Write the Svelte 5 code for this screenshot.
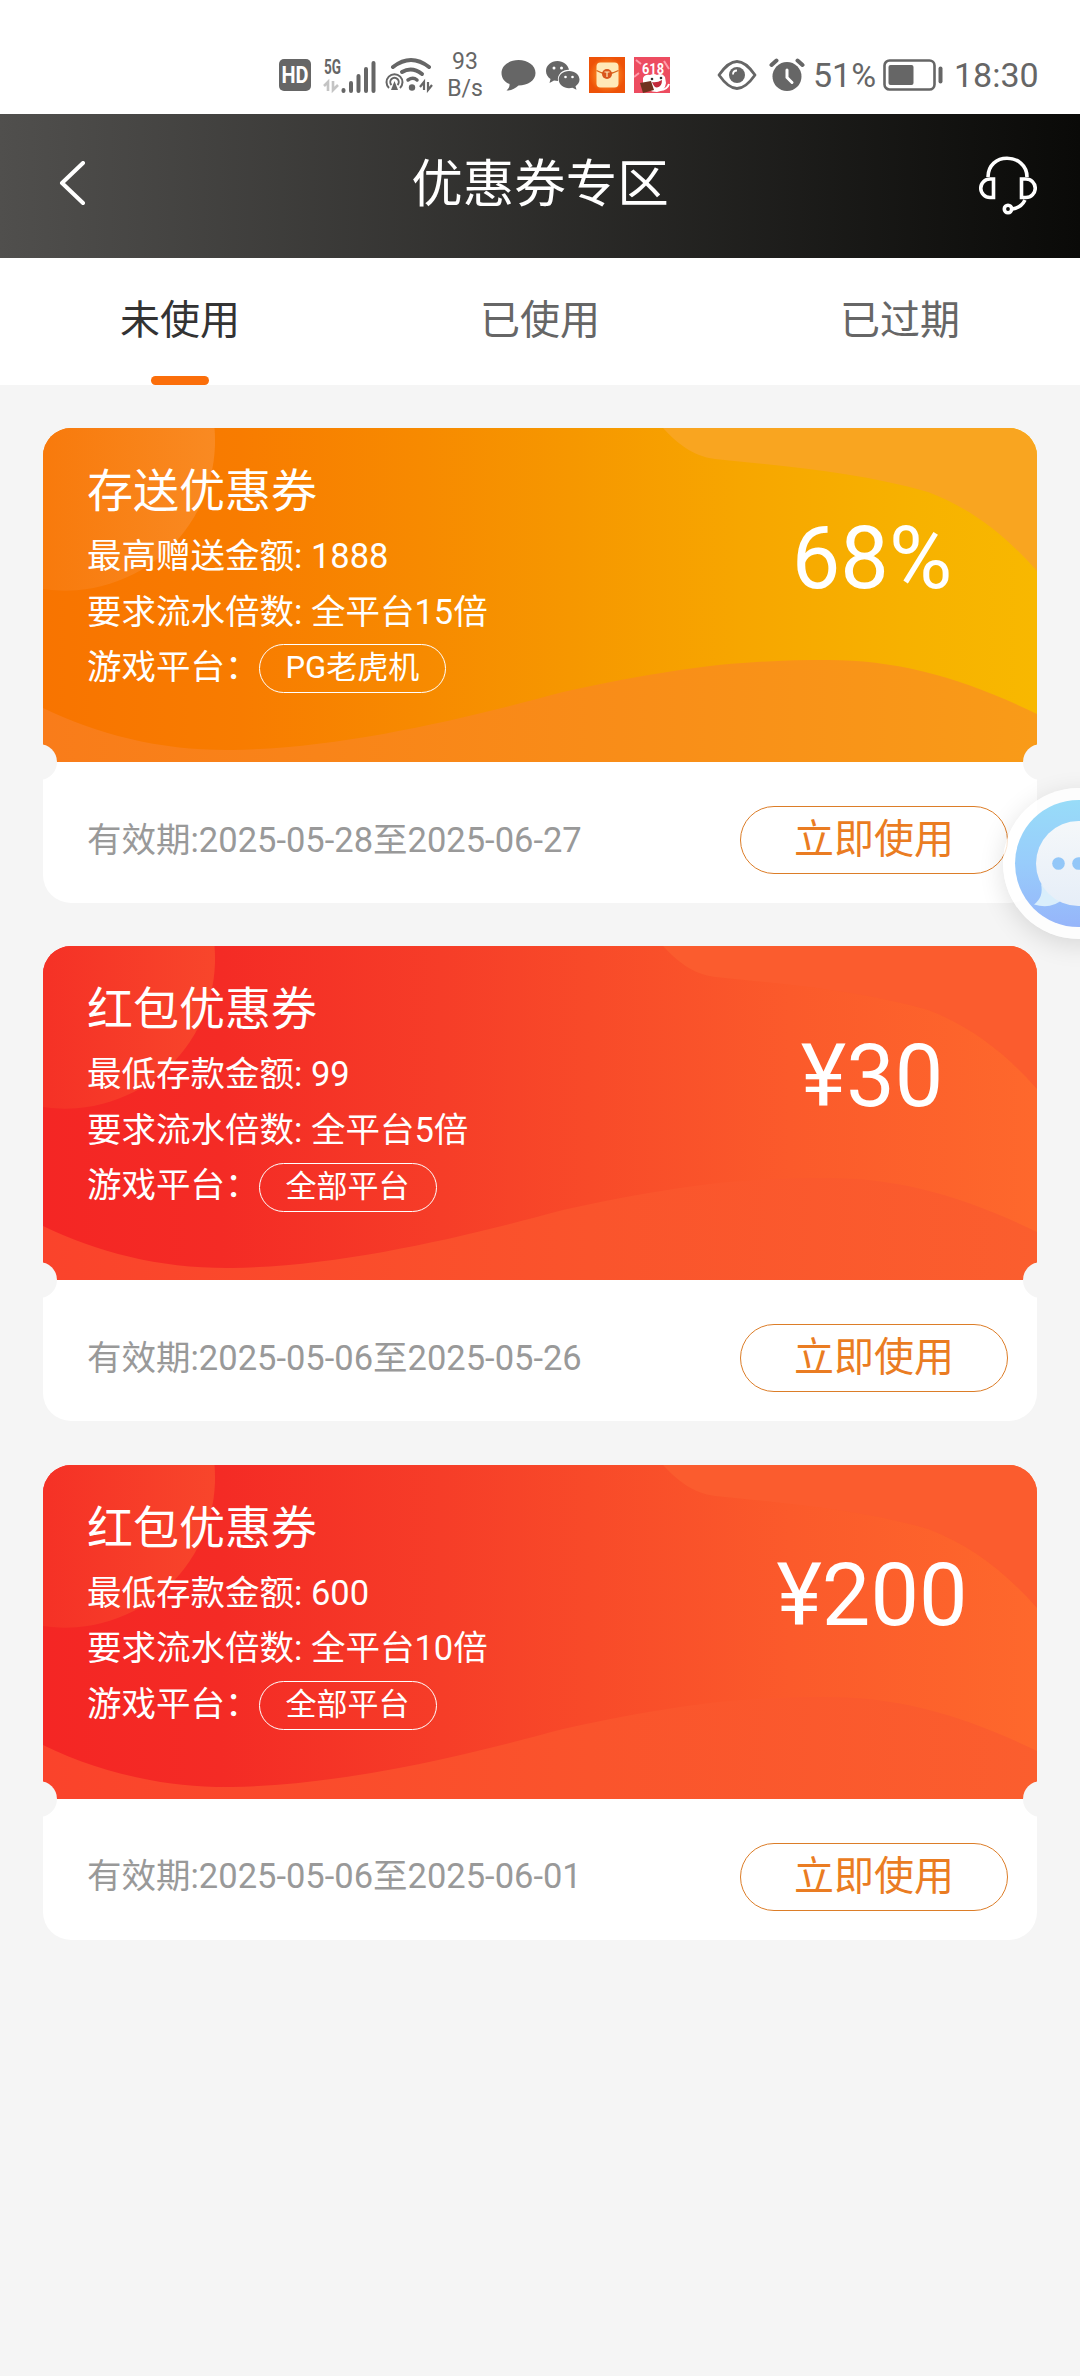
<script lang="ts">
  type Coupon = {
    kind: 'deposit' | 'packet';
    title: string;
    rule: string;
    turnover: string;
    platform: string;
    amount: string;
    period: string;
  };

  const tabs = ['未使用', '已使用', '已过期'];
  let active = $state(0);

  const coupons: Coupon[] = [
    {
      kind: 'deposit',
      title: '存送优惠券',
      rule: '最高赠送金额: 1888',
      turnover: '全平台15倍',
      platform: 'PG老虎机',
      amount: '68%',
      period: '2025-05-28至2025-06-27',
    },
    {
      kind: 'packet',
      title: '红包优惠券',
      rule: '最低存款金额: 99',
      turnover: '全平台5倍',
      platform: '全部平台',
      amount: '¥30',
      period: '2025-05-06至2025-05-26',
    },
    {
      kind: 'packet',
      title: '红包优惠券',
      rule: '最低存款金额: 600',
      turnover: '全平台10倍',
      platform: '全部平台',
      amount: '¥200',
      period: '2025-05-06至2025-06-01',
    },
  ];
</script>

<div class="page">
  <div class="status">
    <svg class="hd" width="32" height="32" viewBox="0 0 32 32">
      <rect width="32" height="32" rx="5" fill="#666" />
      <text x="16" y="24" text-anchor="middle" textLength="27" lengthAdjust="spacingAndGlyphs">HD</text>
    </svg>
    <svg class="signal" width="54" height="40" viewBox="0 -4 54 40">
      <text x="1" y="15" textLength="17" lengthAdjust="spacingAndGlyphs">5G</text>
      <path d="M1 27l4-4v9M10 22v9l5-5" fill="none" stroke="#c4c4c4" stroke-width="2.6" />
      <path d="M20.500 32v-1M28 32v-8M35.500 32v-15M43 32v-22M50.500 32v-28" stroke="#666" stroke-width="4" stroke-linecap="round" />
    </svg>
    <svg class="wifi" width="48" height="36" viewBox="0 0 48 36" fill="none" stroke="#666">
      <path d="M8 10Q26-4 44 10" stroke-width="4" stroke-linecap="round" />
      <path d="M17 15Q27 9 37 17" stroke-width="4" stroke-linecap="round" />
      <path d="M23 23Q28 19.500 32 23" stroke-width="3.500" stroke-linecap="round" />
      <circle cx="27" cy="30.500" r="3.200" fill="#666" stroke="none" />
      <path d="M4 31a8 8 0 1 1 11 0M6.500 28a4.200 4.200 0 1 1 6 0" stroke-width="2" />
      <path d="M9.500 24l3.500 9h-7z" fill="#666" stroke="none" />
      <path d="M35 30l4-5v8M43 25v8l4-5" stroke-width="2.200" />
    </svg>
    <div class="speed"><span>93</span><span>B/s</span></div>
    <svg class="bubble" width="35" height="33" viewBox="0 0 35 33">
      <path d="M17.500 1C8 1 .5 6.500.5 14c0 5 3 9 8 11 .3 3-1 5-3 6.500 5 0 9-2 12-5 9.500 0 17-5 17-12.500S27 1 17.500 1z" fill="#666" />
    </svg>
    <svg class="wechat" width="34" height="30" viewBox="0 0 34 30">
      <path d="M11.500 1C5 1 0 5.500 0 11c0 3.500 1.800 6 4.500 8L3.500 23l4.500-2.500 4 .5C11 14 17 9.500 23 9.800 22 4.500 17 1 11.500 1z" fill="#666" />
      <path d="M23 11c-6 0-10.300 4-10.300 8.600 0 5 5 8.600 10.300 8.600l3.500-.5 4 2-1-3.500c2.500-1.700 4-4 4-6.600C33.500 15 29 11 23 11z" fill="#666" />
      <g fill="#fff"><circle cx="8" cy="8" r="1.500" /><circle cx="15.500" cy="8" r="1.500" /><circle cx="19.500" cy="17" r="1.300" /><circle cx="26.500" cy="17" r="1.300" /></g>
    </svg>
    <svg class="envelope" width="36" height="36" viewBox="0 0 36 36">
      <defs>
        <radialGradient id="envelope-bg">
          <stop offset="0.400" stop-color="#fb8a24" />
          <stop offset="1" stop-color="#ee5208" />
        </radialGradient>
      </defs>
      <rect width="36" height="36" fill="url(#envelope-bg)" />
      <rect x="7.500" y="5.500" width="22" height="25" rx="4" fill="#ffe9b8" />
      <path d="M7.500 13.500Q18 20 29.500 13.500" fill="none" stroke="#d9661c" stroke-width="1.300" />
      <circle cx="18" cy="17" r="5" fill="#d9561c" />
      <path d="M15.500 15h5M18 15v5" stroke="#ffe9b8" stroke-width="1.200" />
    </svg>
    <svg class="promo" width="36" height="36" viewBox="0 0 36 36">
      <rect width="36" height="36" fill="#ed4c60" />
      <path d="M2 3l5 4M0 20l5-4M30 4l5 8" stroke="#ff9dac" stroke-width="2" />
      <text x="19" y="16.500" text-anchor="middle" textLength="22" lengthAdjust="spacingAndGlyphs">618</text>
      <path d="M9 21q2-4 7-3 4-2 7 0 5-3 8 2l1 6q-1 8-9 9-10 0-14-8z" fill="#fff" />
      <path d="M26 33q7 0 9-6" fill="none" stroke="#fff" stroke-width="2" />
      <circle cx="18" cy="22" r="1.300" fill="#333" /><circle cx="27" cy="21" r="1.300" fill="#333" />
      <path d="M18 25q5 1 10-2 0 7-5 7.500-3 0-5-5.500z" fill="#c42a3b" />
      <path d="M6 26l11-2 3 9-11 3z" fill="#70331f" />
    </svg>
    <svg class="eye" width="40" height="32" viewBox="0 0 40 32" fill="none" stroke="#666">
      <path d="M2 16C9 6 15 2.500 20 2.500S31 6 38 16C31 26 25 29.500 20 29.500S9 26 2 16z" stroke-width="2.800" stroke-linejoin="round" />
      <circle cx="20" cy="16" r="8" fill="#666" stroke="none" />
      <path d="M16 15.500q0-4 4-4" stroke="#fff" stroke-width="1.800" />
    </svg>
    <svg class="alarm" width="36" height="34" viewBox="0 0 36 34">
      <circle cx="18" cy="18.500" r="14.500" fill="#666" />
      <path d="M2.500 7l5-4.500M33.500 7l-5-4.500" stroke="#666" stroke-width="4" stroke-linecap="round" />
      <path d="M18 12v7.500l5 5" fill="none" stroke="#fff" stroke-width="3" stroke-linecap="round" />
    </svg>
    <span class="percent">51%</span>
    <svg class="battery" width="60" height="32" viewBox="0 0 60 32">
      <rect x="1.500" y="1.500" width="50" height="29" rx="5" fill="none" stroke="#666" stroke-width="2.600" />
      <rect x="5.500" y="6" width="25" height="20" rx="2" fill="#666" />
      <path d="M57.500 9.500v13" stroke="#666" stroke-width="4" stroke-linecap="round" />
    </svg>
    <span class="clock">18:30</span>
  </div>

  <header class="header">
    <button class="icon-btn" aria-label="返回">
      <svg width="28" height="48" viewBox="0 0 28 48" fill="none" stroke="#fff" stroke-width="4" stroke-linecap="round" stroke-linejoin="round">
        <path d="M25 2L4 22 25 42" />
      </svg>
    </button>
    <h1>优惠券专区</h1>
    <button class="icon-btn" aria-label="客服">
      <svg width="60" height="60" viewBox="0 0 60 60" fill="none" stroke="#fff" stroke-width="3.600">
        <path d="M11 22C11 10 20 3.200 30 3.200S50 10 50 22" />
        <path d="M16.500 24v18.500H13a9.250 9.250 0 0 1 0-18.500zM44.500 24v18.500h4.500a9.250 9.250 0 0 0 0-18.500z" />
        <path d="M48 45Q44 53 35 54" />
        <circle cx="31" cy="54" r="3.700" />
      </svg>
    </button>
  </header>

  <nav class="tabs">
    {#each tabs as tab, i}
      <button class="tab" class:active={active === i} onclick={() => (active = i)}>{tab}</button>
    {/each}
  </nav>

  <main class="list">
    {#each coupons as c, i}
      <section class="coupon {c.kind}">
        <div class="face">
          <svg class="waves" viewBox="0 0 994 334" preserveAspectRatio="none">
            <defs>
              <linearGradient id="glow-{i}" x1="0" x2="1" y1="0" y2="0">
                <stop offset="0" class="glow-from" />
                <stop offset="1" class="glow-to" />
              </linearGradient>
              <linearGradient id="wave-{i}" x1="0" x2="1" y1="0" y2="0">
                <stop offset="0" class="wave-from" />
                <stop offset="0.550" class="wave-mid" />
                <stop offset="1" class="wave-to" />
              </linearGradient>
            </defs>
            <path d="M0 0H171.500A150 150 0 0 1 0 161z" fill="url(#glow-{i})" />
            <path class="top-wave" d="M620 0C634 15 649 28 672 31C740 38 820 45 885 64C930 81 965 110 994 143V0z" />
            <path d="M0 280C55 307 120 323 190 322C300 320 420 291 520 264C640 238 700 232 785 232C855 232 920 250 994 286V334H0z" fill="url(#wave-{i})" />
          </svg>
          <div class="info">
            <h2>{c.title}</h2>
            <p>{c.rule}</p>
            <p>要求流水倍数: {c.turnover}</p>
            <p class="platform">游戏平台：<span class="pill">{c.platform}</span></p>
          </div>
          <div class="amount">{c.amount}</div>
        </div>
        <div class="foot">
          <span class="period">有效期:{c.period}</span>
          <button class="use">立即使用</button>
        </div>
      </section>
    {/each}
  </main>

  <button class="chat" aria-label="在线客服">
    <svg width="131" height="131" viewBox="0 0 131 131">
      <defs>
        <linearGradient id="chat-bg" x1="0" x2="0" y1="0" y2="1">
          <stop offset="0" stop-color="#98dcf8" />
          <stop offset="0.500" stop-color="#98ccfb" />
          <stop offset="1" stop-color="#96b5fa" />
        </linearGradient>
        <linearGradient id="chat-bubble" x1="0" x2="0" y1="0" y2="1">
          <stop offset="0" stop-color="#f5f8fa" />
          <stop offset="1" stop-color="#e6eef8" />
        </linearGradient>
      </defs>
      <circle cx="65.500" cy="65.500" r="63.500" fill="url(#chat-bg)" />
      <path d="M28 86Q31 99 21 106.500Q38 112 50 101z" fill="#d9eefb" />
      <circle cx="65.500" cy="65.500" r="42.500" fill="url(#chat-bubble)" />
      <g fill="#93c7f8"><circle cx="45.500" cy="65.500" r="6.300" /><circle cx="65.500" cy="65.500" r="6.300" /><circle cx="85.500" cy="65.500" r="6.300" /></g>
    </svg>
  </button>
</div>

<style>
  :global(body) {
    background: #f5f5f5;
  }

  .page {
    position: relative;
    width: 1080px;
    height: 2376px;
    overflow: hidden;
    background: #f5f5f5;
    font-family: Roboto, 'Noto Sans CJK SC', sans-serif;
  }

  button {
    padding: 0;
    border: 0;
    background: none;
    font-family: inherit;
  }

  svg {
    display: block;
    flex: none;
  }

  h1, h2, p {
    margin: 0;
    font-weight: 400;
  }

  /* Status bar */
  .status {
    display: flex;
    align-items: center;
    box-sizing: border-box;
    height: 114px;
    padding: 36px 0 0 279px;
    background: #fff;
    color: #666;
  }

  .hd text {
    fill: #fff;
    font-size: 23px;
    font-weight: 700;
  }

  .signal {
    margin-left: 12px;
  }

  .signal text {
    fill: #666;
    font-size: 20px;
    font-weight: 700;
  }

  .wifi {
    margin-left: 8px;
  }

  .speed {
    display: flex;
    flex-direction: column;
    align-items: center;
    width: 38px;
    margin-left: 13px;
    font-size: 23px;
    line-height: 27px;
  }

  .bubble {
    margin-left: 17px;
  }

  .wechat {
    margin-left: 10px;
  }

  .envelope {
    margin-left: 9px;
  }

  .promo {
    margin-left: 9px;
  }

  .promo text {
    fill: #fff;
    font-size: 15px;
    font-weight: 700;
  }

  .eye {
    margin-left: 47px;
  }

  .alarm {
    margin-left: 12px;
  }

  .percent,
  .clock {
    font-size: 34px;
    line-height: 40px;
  }

  .percent {
    width: 62px;
    margin-left: 8px;
  }

  .battery {
    margin-left: 8px;
  }

  .clock {
    margin-left: 11px;
  }

  /* Header */
  .header {
    display: flex;
    align-items: center;
    justify-content: space-between;
    box-sizing: border-box;
    height: 144px;
    padding: 0 43px 2px 58px;
    background: linear-gradient(90deg, #504f4d, #0a0a08);
  }

  .icon-btn {
    display: flex;
    align-items: center;
    width: 60px;
    height: 60px;
  }

  h1 {
    margin-right: 15px;
    color: #fff;
    font-size: 51.5px;
    line-height: 60px;
  }

  /* Tabs */
  .tabs {
    display: grid;
    grid-template-columns: repeat(3, 1fr);
    height: 127px;
    background: #fff;
  }

  .tab {
    display: flex;
    flex-direction: column;
    align-items: center;
    justify-content: space-between;
    padding-top: 33px;
    color: #666;
    font-size: 40px;
    line-height: 60px;
  }

  .tab::after {
    content: '';
    width: 58px;
    height: 9px;
    border-radius: 5px;
  }

  .tab.active {
    color: #333;
  }

  .tab.active::after {
    background: #fb6e0a;
  }

  /* Coupons */
  .list {
    display: flex;
    flex-direction: column;
    gap: 43.4px;
    padding: 43px;
  }

  .coupon {
    position: relative;
    overflow: hidden;
    border-radius: 28px;
    background: #fff;
  }

  /* Ticket notches */
  .coupon::before,
  .coupon::after {
    content: '';
    position: absolute;
    z-index: 2;
    top: 316px;
    width: 36px;
    height: 36px;
    border-radius: 50%;
    background: #f5f5f5;
  }

  .coupon::before {
    left: -22px;
  }

  .coupon::after {
    right: -22px;
  }

  .face {
    position: relative;
    display: flex;
    justify-content: space-between;
    box-sizing: border-box;
    height: 334px;
    padding: 34px 0 0 44px;
    color: #fff;
  }

  .deposit .face {
    background: linear-gradient(90deg, #f87400, #f87c00 20%, #f78a00 38%, #f69700 53%, #f7a600 70%, #f7b200 88%, #f8b800);
  }

  .packet .face {
    background: linear-gradient(90deg, #f42624, #f42b25 18%, #f63d28 40%, #f84a29 55%, #fb5a2b 75%, #fe682c);
  }

  .waves {
    position: absolute;
    inset: 0;
    width: 100%;
    height: 100%;
  }

  .deposit .glow-from { stop-color: #f87a0c; }
  .deposit .glow-to { stop-color: #f98a22; }
  .deposit .top-wave { fill: #f9a520; }
  .deposit .wave-from { stop-color: #f97c1a; }
  .deposit .wave-mid { stop-color: #f98c18; }
  .deposit .wave-to { stop-color: #f99b18; }
  .packet .glow-from { stop-color: #f53126; }
  .packet .glow-to { stop-color: #f8462b; }
  .packet .top-wave { fill: #fb5c2e; }
  .packet .wave-from { stop-color: #fa432b; }
  .packet .wave-mid { stop-color: #fa542c; }
  .packet .wave-to { stop-color: #fb5e2e; }

  .info {
    position: relative;
  }

  h2 {
    margin-bottom: 8px;
    font-size: 46px;
    line-height: 59px;
  }

  .info p {
    font-size: 34.5px;
    line-height: 55.5px;
    white-space: pre;
  }

  .platform {
    display: flex;
    align-items: center;
  }

  .pill {
    box-sizing: border-box;
    height: 49px;
    margin: 2px 0 0 -1px;
    padding: 0 26px;
    border: 1px solid #fff;
    border-radius: 25px;
    font-size: 31px;
    line-height: 46px;
  }

  .amount {
    position: relative;
    width: 330px;
    padding-top: 47px;
    font-size: 86.4px;
    line-height: 100px;
    text-align: center;
  }

  .foot {
    display: flex;
    align-items: center;
    justify-content: space-between;
    box-sizing: border-box;
    height: 141px;
    padding: 15px 29px 0 44px;
  }

  .period {
    padding-bottom: 7px;
    color: #999;
    font-size: 34.5px;
  }

  .use {
    box-sizing: border-box;
    width: 268px;
    height: 68px;
    border: 1px solid #dc7d28;
    border-radius: 34px;
    color: #ea7c22;
    font-size: 40px;
    line-height: 62px;
  }

  .chat {
    position: absolute;
    top: 788px;
    left: 1003px;
    padding: 10px;
    border-radius: 50%;
    background: rgba(255, 255, 255, 0.8);
    box-shadow: 0 6px 26px rgba(0, 0, 0, 0.12);
  }
</style>
